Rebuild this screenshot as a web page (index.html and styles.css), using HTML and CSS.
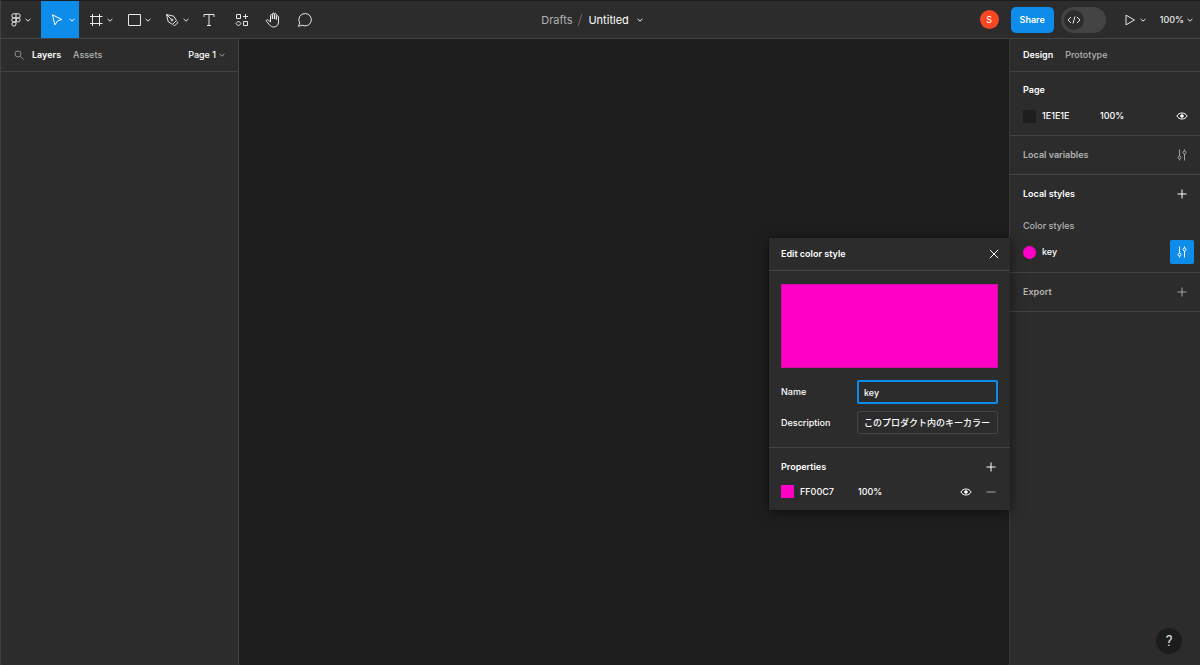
FILE: index.html
```html
<!DOCTYPE html>
<html lang="en">
<head>
<meta charset="utf-8">
<title>Untitled</title>
<link rel="stylesheet" href="styles.css">
</head>
<body>
<svg class="defs" aria-hidden="true">
  <symbol id="caret" viewBox="0 0 8 8"><path d="M1.600 2.900 4 5.200 6.400 2.900"/></symbol>
  <symbol id="plus" viewBox="0 0 10 10"><path d="M5 .5v9M.5 5h9"/></symbol>
  <symbol id="eye" viewBox="0 0 12 10"><path d="M.9 5C2 3 3.800 2 6 2s4 1 5.100 3C10 7 8.200 8 6 8S2 7 .9 5Z"/><circle cx="6" cy="5" r="1.300" fill="currentColor"/></symbol>
  <symbol id="sliders" viewBox="0 0 12 12"><path d="M3.500 .5v6.500M3.500 10v1.500M8.500 5v6.500M8.500 .5v1.500"/><circle cx="3.500" cy="8.500" r="1.500"/><circle cx="8.500" cy="3.500" r="1.500"/></symbol>
</svg>
<div class="app">
  <header class="toolbar">
    <nav class="tools" aria-label="Tools">
      <button class="tool menu" aria-label="Main menu">
        <svg class="icon" viewBox="0 0 16 16"><path d="M8 1.800H5.800a2.050 2.050 0 0 0 0 4.100H8ZM8 1.800h2.200a2.050 2.050 0 0 1 0 4.100H8M8 5.900H5.800a2.050 2.050 0 0 0 0 4.100H8ZM8 10H5.800A2.050 2.050 0 1 0 8 12.050Z"/><circle cx="10.100" cy="7.950" r="2.050"/></svg>
        <svg class="caret"><use href="#caret"/></svg>
      </button>
      <button class="tool active" aria-label="Move">
        <svg class="icon" viewBox="0 0 16 16"><path d="m3.500 2.800 9.300 4.700-4.200 1.400-2.700 4Z"/></svg>
        <svg class="caret"><use href="#caret"/></svg>
      </button>
      <button class="tool split" aria-label="Frame">
        <svg class="icon" viewBox="0 0 16 16"><path d="M4.500 2v12M11.500 2v12M2 4.500h12.500M2 11.500h12.500"/></svg>
        <svg class="caret"><use href="#caret"/></svg>
      </button>
      <button class="tool split" aria-label="Rectangle">
        <svg class="icon" viewBox="0 0 16 16"><path d="M2.500 2.500h12v11h-12z"/></svg>
        <svg class="caret"><use href="#caret"/></svg>
      </button>
      <button class="tool split" aria-label="Pen">
        <svg class="icon" viewBox="0 0 16 16"><path d="m2.500 2.500 7.200 1.700 2.800 4.300-3.900 3.900L4.200 9.700ZM2.500 2.500l4.700 4.700"/><circle cx="8" cy="8" r="1"/><path d="m13.200 9.500.5 1.300-2.900 2.900-1.300-.5"/></svg>
        <svg class="caret"><use href="#caret"/></svg>
      </button>
      <button class="tool single" aria-label="Text">
        <svg class="icon" viewBox="0 0 16 16"><path d="M3 5V2.500h10V5M8 2.500v11M6 13.500h4"/></svg>
      </button>
      <button class="tool single" aria-label="Resources">
        <svg class="icon" viewBox="0 0 16 16"><path d="M3.500 2.500h4v4h-4zM10.500 9.500h4v4h-4zM12.500 2v5M10 4.500h5M5.500 9l2.500 2.500L5.500 14 3 11.500Z"/></svg>
      </button>
      <button class="tool single" aria-label="Hand">
        <svg class="icon" viewBox="0 0 16 16"><path d="M5.500 9V3.500c0-1.300 1.900-1.300 1.900 0V7 2c0-1.300 2-1.300 2 0v5-4.500c0-1.300 1.900-1.300 1.900 0V7.500 4.800c0-1.300 2.200-1.300 2.200 0V10c0 3-2 5-4.600 5-2 0-3.300-.8-4.200-2L1.400 9.300C.7 8.200 2.100 7.200 3.200 8L5.500 10Z"/></svg>
      </button>
      <button class="tool single" aria-label="Comment">
        <svg class="icon" viewBox="0 0 16 16"><path d="M8.300 1.500a6.200 6.200 0 1 1-3 11.700L1.500 14.300l1.200-3.400A6.200 6.200 0 0 1 8.300 1.500Z"/></svg>
      </button>
    </nav>
    <div class="title">
      <a class="muted" href="#drafts">Drafts</a>
      <svg class="slash" viewBox="0 0 6 14"><path d="M1 13 5 1"/></svg>
      <button class="text-btn">Untitled<svg class="caret"><use href="#caret"/></svg></button>
    </div>
    <div class="actions">
      <span class="avatar">S</span>
      <button class="share">Share</button>
      <button class="devmode" role="switch" aria-checked="false" aria-label="Dev Mode">
        <span class="knob"><svg class="code" viewBox="0 0 14 10"><path d="M4 2 1 5l3 3M10 2l3 3-3 3M8 1.500l-2 7"/></svg></span>
      </button>
      <button class="text-btn present" aria-label="Present">
        <svg class="play" viewBox="0 0 12 12"><path d="M2 1.200 10.500 6 2 10.800Z"/></svg>
        <svg class="caret"><use href="#caret"/></svg>
      </button>
      <button class="text-btn zoom">100%<svg class="caret"><use href="#caret"/></svg></button>
    </div>
  </header>

  <div class="workspace">
    <aside class="layers">
      <div class="tabs">
        <button class="text-btn search" aria-label="Search"><svg class="glass" viewBox="0 0 10 10"><circle cx="4" cy="4" r="3"/><path d="m6.300 6.300 3.200 3.200"/></svg></button>
        <button class="tab selected">Layers</button>
        <button class="tab">Assets</button>
        <button class="text-btn page-menu">Page 1<svg class="caret dim"><use href="#caret"/></svg></button>
      </div>
    </aside>

    <main class="canvas"></main>

    <aside class="inspector">
      <div class="tabs">
        <button class="tab selected">Design</button>
        <button class="tab">Prototype</button>
      </div>
      <section class="section page">
        <h2 class="heading">Page</h2>
        <div class="row">
          <span class="swatch dark"></span><span class="hex">1E1E1E</span><span class="opacity">100%</span>
          <button class="icon-btn" aria-label="Toggle visibility"><svg class="eye"><use href="#eye"/></svg></button>
        </div>
      </section>
      <section class="section single-row">
        <h2 class="heading soft">Local variables</h2>
        <button class="icon-btn dim" aria-label="Open variables"><svg class="sliders"><use href="#sliders"/></svg></button>
      </section>
      <section class="section styles">
        <div class="row title-row">
          <h2 class="heading">Local styles</h2>
          <button class="icon-btn" aria-label="Create style"><svg class="plus"><use href="#plus"/></svg></button>
        </div>
        <h3 class="subheading">Color styles</h3>
        <div class="row">
          <span class="swatch round pink"></span><span class="hex">key</span>
          <button class="icon-btn on" aria-label="Edit style"><svg class="sliders"><use href="#sliders"/></svg></button>
        </div>
      </section>
      <section class="section single-row">
        <h2 class="heading soft">Export</h2>
        <button class="icon-btn dim" aria-label="Add export"><svg class="plus"><use href="#plus"/></svg></button>
      </section>
    </aside>

    <section class="dialog" role="dialog" aria-labelledby="dialog-title">
      <div class="dialog-head">
        <h2 class="heading" id="dialog-title">Edit color style</h2>
        <button class="icon-btn close" aria-label="Close"><svg class="plus" viewBox="0 0 10 10"><path d="m.8 .8 8.400 8.400M9.200 .8.8 9.200"/></svg></button>
      </div>
      <form class="dialog-body">
        <div class="preview"></div>
        <div class="field">
          <label for="style-name">Name</label>
          <input class="focused" id="style-name" type="text" value="key">
        </div>
        <div class="field">
          <label for="style-desc">Description</label>
          <input id="style-desc" type="text" value="このプロダクト内のキーカラー">
        </div>
      </form>
      <div class="properties">
        <div class="row">
          <h3 class="heading">Properties</h3>
          <button class="icon-btn" aria-label="Add property"><svg class="plus"><use href="#plus"/></svg></button>
        </div>
        <div class="row">
          <span class="swatch pink"></span><span class="hex">FF00C7</span><span class="opacity">100%</span>
          <button class="icon-btn" aria-label="Toggle property visibility"><svg class="eye"><use href="#eye"/></svg></button>
          <button class="icon-btn dim follow" aria-label="Remove property"><svg class="plus" viewBox="0 0 10 10"><path d="M.5 5h9"/></svg></button>
        </div>
      </div>
    </section>
    <button class="help" aria-label="Help">?</button>
  </div>
</div>
</body>
</html>
```
FILE: styles.css
```css
* { box-sizing: border-box; }
body {
  margin: 0;
  background: #1e1e1e;
  color: #fff;
  font: 500 9px/12px Inter, "Noto Sans CJK JP", sans-serif;
}
button {
  display: flex;
  align-items: center;
  padding: 0;
  border: 0;
  background: none;
  color: inherit;
  font: inherit;
}
h2, h3 { margin: 0; font-size: 9px; }
svg { display: block; flex: none; fill: none; stroke: currentColor; stroke-width: 1; }
.defs { position: absolute; width: 0; height: 0; }
.caret { width: 8px; height: 8px; }
.dim { color: #a5a5a5; }

.app { display: flex; flex-direction: column; min-height: 100vh; border-left: 1px solid #414141; }

.toolbar {
  display: grid;
  grid-template-columns: 1fr auto 1fr;
  height: 39px;
  border-top: 1px solid #1c1c1c;
  border-bottom: 1px solid #444;
  background: #2c2c2c;
  color: #e8e8e8;
}
.tools { display: flex; }
.tool { justify-content: center; }
.tool .icon { width: 16px; height: 16px; }
.menu { width: 40px; padding-right: 2px; }
.active { width: 38px; gap: 3px; padding-left: 4px; background: #0d8ce9; color: #fff; }
.split { width: 38px; gap: 2px; padding-left: 6px; }
.single { width: 32px; }
.title { display: flex; align-items: center; gap: 5px; padding-right: 16px; font-size: 11px; font-weight: 400; }
.muted { color: #b0b0b0; text-decoration: none; }
.slash { width: 6px; height: 14px; color: #6a6a6a; }
.text-btn { gap: 7px; }
.title .text-btn { color: #fff; }
.actions { display: flex; align-items: center; justify-content: flex-end; padding-right: 6px; }
.avatar {
  width: 19px;
  border-radius: 50%;
  background: #f64822;
  color: #fff;
  font-weight: 400;
  line-height: 19px;
  text-align: center;
}
.share {
  justify-content: center;
  width: 43px;
  height: 26px;
  margin-left: 12px;
  border-radius: 5px;
  background: #0d8ce9;
  color: #fff;
  font-weight: 600;
}
.devmode { width: 45px; height: 26px; margin-left: 7px; padding: 3px; border-radius: 13px; background: #444; }
.knob { display: grid; place-items: center; width: 20px; height: 20px; border-radius: 50%; background: #2c2c2c; }
.code { width: 14px; height: 10px; }
.present { gap: 3px; margin-left: 18px; }
.play { width: 12px; height: 12px; }
.zoom { gap: 2px; margin-left: 13px; }

.workspace { position: relative; display: flex; flex: 1; }
.layers { width: 238px; border-right: 1px solid #444; background: #2c2c2c; }
.canvas { flex: 1; }
.inspector { width: 191px; border-left: 1px solid #383838; background: #2c2c2c; }
.tabs { display: flex; align-items: center; gap: 12px; height: 33px; padding: 0 12px 0 13px; border-bottom: 1px solid #414141; }
.tab { color: #b3b3b3; }
.tab.selected { color: #fff; font-weight: 600; }
.glass { width: 10px; height: 10px; color: #8a8a8a; }
.search { margin-right: -4px; }
.page-menu { gap: 2px; margin-left: auto; }

.section { border-bottom: 1px solid #444; padding: 0 6px 0 13px; }
.heading { font-weight: 600; }
.soft { color: #b3b3b3; }
.row, .single-row { display: flex; align-items: center; }
.row { height: 26px; }
.single-row { height: 39px; }
.page { padding-top: 12px; padding-bottom: 6px; }
.page .heading { margin-bottom: 7px; }
.title-row { height: 38px; }
.subheading { height: 26px; color: #b3b3b3; font-weight: 500; line-height: 26px; }
.styles { padding-bottom: 7px; }
.swatch { width: 13px; height: 13px; margin-right: 6px; }
.dark { background: #1e1e1e; }
.pink { background: #ff00c7; }
.round { border-radius: 50%; }
.hex { width: 58px; }
.icon-btn { justify-content: center; width: 24px; height: 24px; margin-left: auto; }
.icon-btn.on { border-radius: 2px; background: #0d8ce9; }
.icon-btn.follow { margin-left: 1px; }
.plus { width: 10px; height: 10px; }
.eye { width: 12px; height: 10px; }
.sliders { width: 12px; height: 12px; }

.dialog {
  position: absolute;
  top: 199px;
  right: 190px;
  width: 241px;
  background: #2c2c2c;
  box-shadow: 0 2px 12px rgba(0, 0, 0, .5), 0 0 1px rgba(0, 0, 0, .6);
}
.dialog-head { display: flex; align-items: center; height: 33px; padding: 0 4px 0 12px; border-bottom: 1px solid #444; }
.dialog-body { display: grid; gap: 7px; padding: 13px 12px; border-bottom: 1px solid #444; }
.preview { height: 84px; margin-bottom: 5px; border: 1px solid #d00ca5; background: #ff00c7; }
.field { display: grid; grid-template-columns: 76px 1fr; align-items: center; }
.field input {
  min-width: 0;
  height: 23px;
  padding: 0 6px;
  border: 1px solid #444;
  border-radius: 2px;
  outline: 0;
  background: transparent;
  color: #fff;
  font: inherit;
}
.field .focused { height: 24px; padding: 0 5px; border: 2px solid #0d8ce9; }
.properties { padding: 6px 7px 6px 12px; }
.properties .row { height: 25px; }
.help {
  position: absolute;
  right: 18px;
  bottom: 11px;
  justify-content: center;
  width: 26px;
  height: 26px;
  border-radius: 50%;
  background: #1c1c1c;
  color: #e0e0e0;
  font: 400 14px/16px Roboto, sans-serif;
}
```
